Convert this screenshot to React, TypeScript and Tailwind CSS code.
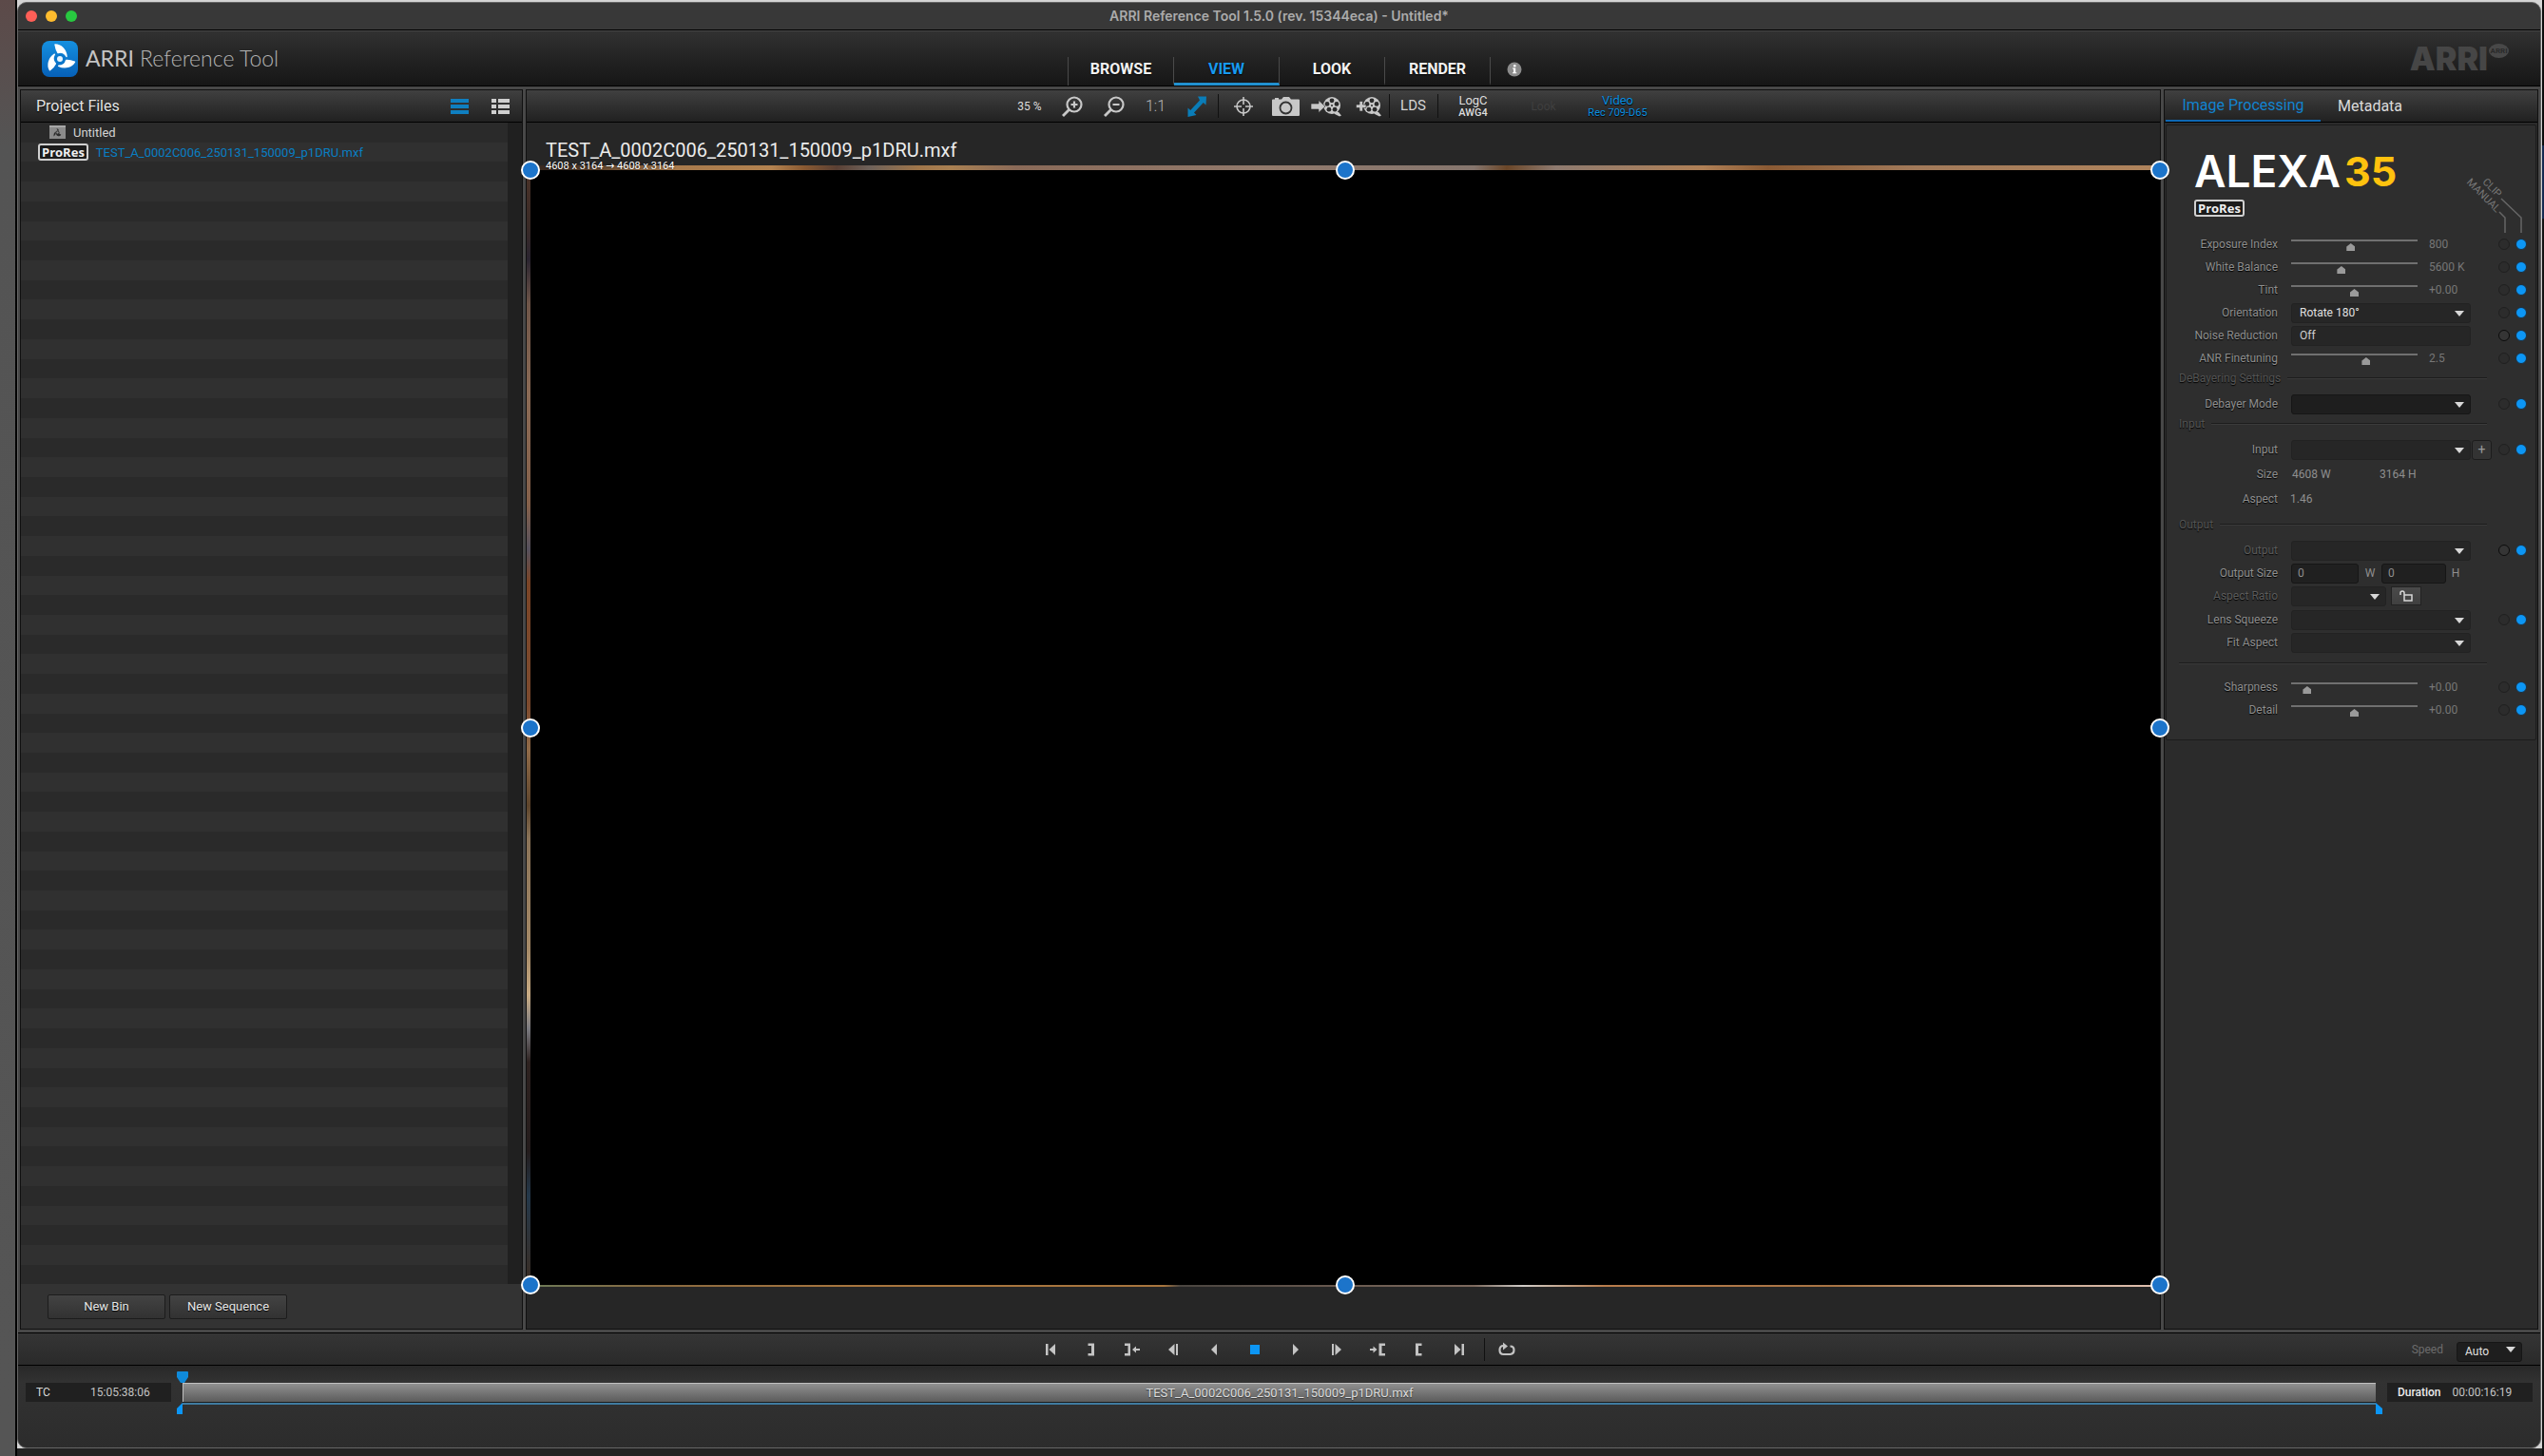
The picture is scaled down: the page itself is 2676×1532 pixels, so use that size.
import type { ReactNode } from "react";

const CLIP_NAME = "TEST_A_0002C006_250131_150009_p1DRU.mxf";

const labelShadow = "[text-shadow:0_1px_1px_#000]";

function AppLogo({ className }: { className?: string }) {
    const blade = "M14 4C20 4 25.5 9 26 16.5C24 13 20.5 11.5 17 12.5C15.5 10.5 14.5 7 14 4Z";
    return (
        <svg className={className} viewBox="0 0 38 38" fill="none">
            <defs>
                <linearGradient id="logoBg" x1="0" y1="0" x2="0" y2="1">
                    <stop offset="0" stopColor="#1590e0" />
                    <stop offset="1" stopColor="#0660b8" />
                </linearGradient>
            </defs>
            <rect width="38" height="38" rx="8" fill="url(#logoBg)" />
            {[0, 120, 240].map((a) => (
                <path key={a} d={blade} fill="#fff" stroke="#fff" strokeWidth="1.4" strokeLinejoin="round" transform={`rotate(${a} 19 19)`} />
            ))}
            <circle cx="19" cy="19" r="5" fill="#0b78cc" />
            <circle cx="19" cy="19" r="3" fill="#e8f3fc" />
        </svg>
    );
}

function BinIcon() {
    return (
        <svg className="w-[17px] h-[14px]" viewBox="0 0 17 14">
            <rect width="17" height="14" fill="#8b8b8b" />
            <rect width="17" height="2" fill="#a8a8a8" />
            <g fill="#2b2b2b">
                <path d="M7.5 3q2.500.4 2.500 2.800l-1.500-.6z" />
                <path d="M4.500 11.500q-.4-3.500 2-5l.2 2q-.8 1.800-2.200 3z" />
                <path d="M6.500 9.500l4-1 1.800 1.300q-1.500 2.300-3.700 1.200z" />
            </g>
            <circle cx="8.500" cy="7.500" r="1.600" fill="none" stroke="#2b2b2b" />
        </svg>
    );
}

function ProResBadge() {
    return (
        <span className="inline-flex h-[18px] items-center rounded-[3px] border-2 border-[#d0d0d0] bg-[#1c1c1c] px-[2px] font-['Open_Sans',sans-serif] text-[13px] leading-none font-bold text-[#f0f0f0]">
            ProRes
        </span>
    );
}

function Caret({ className }: { className: string }) {
    return (
        <svg className={className} viewBox="0 0 10 6">
            <path d="M0 0h10L5 6z" fill="#d8d8d8" />
        </svg>
    );
}

function Dropdown({ id, value = "", width, dark, bright }: { id: string; value?: string; width: string; dark?: boolean; bright?: boolean }) {
    return (
        <div className={`relative h-[21px] ${width}`}>
            <select
                id={id}
                defaultValue={value}
                className={`h-full w-full appearance-none rounded-[3px] border px-2 text-[12px] leading-none ${dark ? "border-[#161616] bg-[#1e1e1e]" : "border-[#222] bg-[#262626]"} ${bright ? "text-[#e0e0e0]" : "text-[#bbb]"}`}
            >
                <option>{value}</option>
            </select>
            <Caret className="pointer-events-none absolute top-2 right-[7px] h-[6px] w-[10px]" />
        </div>
    );
}

function TitleBar() {
    return (
        <div className="grid h-[29px] grid-cols-[1fr_auto_1fr] items-center border-b border-black bg-[#383838] px-2">
            <div className="flex gap-2">
                <button aria-label="Close" className="h-3 w-3 rounded-full bg-[#ff5f57]" />
                <button aria-label="Minimize" className="ml-px h-3 w-3 rounded-full bg-[#febc2e]" />
                <button aria-label="Zoom" className="ml-px h-3 w-3 rounded-full bg-[#28c840]" />
            </div>
            <h1 className="font-['Inter',sans-serif] text-[14px] leading-none font-semibold text-[#ababab]">ARRI Reference Tool 1.5.0 (rev. 15344eca) - Untitled*</h1>
        </div>
    );
}

function Header() {
    const tabs = ["BROWSE", "VIEW", "LOOK", "RENDER"];
    return (
        <header className="grid h-[59px] grid-cols-[1fr_auto_1fr] items-end border-t border-b border-t-[#484848] border-b-black bg-gradient-to-b from-[#313131] to-[#161616]">
            <div className="flex h-full items-center gap-2 pl-[25px]">
                <AppLogo className="h-[38px] w-[38px]" />
                <span className="font-['Lato',sans-serif] text-[23px] leading-none font-light text-[#b4b4b4]">
                    <span className="font-normal text-[#c4c4c4]">ARRI</span> Reference Tool
                </span>
            </div>
            <nav className="flex h-[30px] border-l border-[#4a4a4a]">
                {tabs.map((t) => (
                    <button
                        key={t}
                        className={`w-[111px] border-r border-r-[#4a4a4a] border-b-[3px] pb-px text-[16px] leading-none font-bold ${labelShadow} ${t === "VIEW" ? "border-b-[#2191cf] text-[#189af0]" : "border-b-transparent text-[#f2f2f2]"}`}
                    >
                        {t}
                    </button>
                ))}
            </nav>
            <div className="flex h-full items-end justify-between pr-[33px]">
                <button aria-label="Info" className="mb-[9px] ml-[17px]">
                    <svg className="h-4 w-4" viewBox="0 0 16 16">
                        <circle cx="8" cy="8" r="7.500" fill="#8c8c8c" />
                        <circle cx="8.300" cy="4.300" r="1.300" fill="#fff" />
                        <path d="M6 6.500h3.200v4.800h1.100v1H6v-1h1.100V7.500H6z" fill="#fff" />
                    </svg>
                </button>
                <div className="flex h-full items-center gap-px">
                    <span className="font-['Inter',sans-serif] text-[34px] leading-none font-black text-[#464646]">ARRI</span>
                    <span className="mb-4 flex h-[15px] w-[21px] items-center justify-center rounded-[50%] bg-[#484848] text-[8px] font-bold text-[#2a2a2a]">ARRI</span>
                </div>
            </div>
        </header>
    );
}

function ProjectPanel() {
    const rows = Array.from({ length: 59 }, (_, i) => i);
    return (
        <aside className="flex w-[529px] shrink-0 flex-col border border-[#101010] bg-[#333]">
            <div className="flex h-[34px] items-center justify-between border-b border-black bg-gradient-to-b from-[#404040] to-[#212121] pr-[13px] pl-4">
                <h2 className={`text-[16px] text-[#e4e4e4] ${labelShadow}`}>Project Files</h2>
                <div className="flex gap-6">
                    <button aria-label="Flat list">
                        <svg className="h-4 w-[19px]" viewBox="0 0 19 16" fill="#0f7fc0">
                            <path d="M0 0h19v4H0zM0 6h19v4H0zM0 12h19v4H0z" />
                        </svg>
                    </button>
                    <button aria-label="Detail list">
                        <svg className="h-4 w-[19px]" viewBox="0 0 19 16" fill="#cfcfcf">
                            <path d="M0 0h5v4H0zM7 0h12v4H7zM0 6h5v4H0zM7 6h12v4H7zM0 12h5v4H0zM7 12h12v4H7z" />
                        </svg>
                    </button>
                </div>
            </div>
            <div className="flex flex-1">
                <ul className="flex flex-1 flex-col">
                    {rows.map((i) => (
                        <li key={i} className={`flex flex-1 basis-0 items-center ${i % 2 ? "bg-[#303030]" : "bg-[#2a2a2a]"}`}>
                            {i === 0 && (
                                <div className="flex items-center gap-2 pl-[30px]">
                                    <BinIcon />
                                    <span className="text-[13px] leading-none text-[#d4d4d4]">Untitled</span>
                                </div>
                            )}
                            {i === 1 && (
                                <div className="flex items-center gap-2 pl-[18px]">
                                    <ProResBadge />
                                    <span className="text-[13px] leading-none text-[#087fc4]">{CLIP_NAME}</span>
                                </div>
                            )}
                        </li>
                    ))}
                </ul>
                <div className="w-[15px] bg-[#202020]" />
            </div>
            <div className="flex h-[47px] items-center gap-1 pl-7">
                {["New Bin", "New Sequence"].map((t) => (
                    <button key={t} className={`h-[26px] w-[124px] rounded-[2px] border border-[#1c1c1c] bg-gradient-to-b from-[#434343] to-[#323232] text-[13px] leading-none text-[#e8e8e8] ${labelShadow}`}>
                        {t}
                    </button>
                ))}
            </div>
        </aside>
    );
}

function Reel() {
    return (
        <g>
            <circle cx="22" cy="10" r="9" fill="#c8c8c8" />
            <path d="M24 17h5l3 3.500-2 1-5-2.500z" fill="#c8c8c8" />
            <g fill="#2a2a2a">
                <circle cx="22" cy="4.800" r="2.400" />
                <circle cx="27" cy="8.400" r="2.400" />
                <circle cx="25.100" cy="14.200" r="2.400" />
                <circle cx="18.900" cy="14.200" r="2.400" />
                <circle cx="17" cy="8.400" r="2.400" />
                <circle cx="22" cy="10" r="1" />
            </g>
        </g>
    );
}

function Tool({ label, width, children }: { label: string; width: string; children: ReactNode }) {
    return (
        <button aria-label={label} className={`flex h-full items-center justify-center ${width}`}>
            {children}
        </button>
    );
}

function ToolDivider() {
    return <div className="h-[25px] w-px bg-[#111]" />;
}

function Toolbar() {
    return (
        <div className="flex h-[34px] items-center justify-center border-b border-black bg-gradient-to-b from-[#404040] to-[#212121] pr-6 text-[#c8c8c8]">
            <span className="w-[47px] text-center text-[12px] text-[#dcdcdc]">35 %</span>
            <Tool label="Zoom in" width="w-[43px]">
                <svg className="h-[22px] w-[22px]" viewBox="0 0 22 22" fill="none" stroke="currentColor">
                    <circle cx="13" cy="9" r="7.500" strokeWidth="2.200" />
                    <path d="M7.500 14.500L1 21" strokeWidth="2.800" />
                    <path d="M9.500 9h7M13 5.500v7" strokeWidth="2.200" />
                </svg>
            </Tool>
            <Tool label="Zoom out" width="w-[44px]">
                <svg className="h-[22px] w-[22px]" viewBox="0 0 22 22" fill="none" stroke="currentColor">
                    <circle cx="13" cy="9" r="7.500" strokeWidth="2.200" />
                    <path d="M7.500 14.500L1 21" strokeWidth="2.800" />
                    <path d="M9.500 9h7" strokeWidth="2.200" />
                </svg>
            </Tool>
            <button className="h-full w-[44px] text-[16px] font-light text-[#b8b8b8]">1:1</button>
            <Tool label="Fit to view" width="w-[43px]">
                <svg className="h-[22px] w-5" viewBox="0 0 20 22" fill="#0a7db8">
                    <path d="M11 0.500L20 0.500L19.500 9.500L16.800 7L7 17.500L9.500 20L0.500 22L0.500 12.500L3.200 15L13 4.500z" />
                </svg>
            </Tool>
            <ToolDivider />
            <Tool label="Crosshair" width="w-[52px]">
                <svg className="h-5 w-5" viewBox="0 0 20 20" fill="none" stroke="currentColor" strokeWidth="1.600">
                    <circle cx="10" cy="10" r="7" />
                    <path d="M10 0v8M10 12v8M0 10h8M12 10h8" />
                </svg>
            </Tool>
            <Tool label="Snapshot" width="w-[37px]">
                <svg className="h-5 w-[29px]" viewBox="0 0 29 20">
                    <path d="M1 2.500h2V1h4v1.500h3L12 0h6l2 2.500h8q1 0 1 1V19q0 1-1 1H1q-1 0-1-1V3.500q0-1 1-1z" fill="currentColor" />
                    <circle cx="14.500" cy="11.500" r="6" fill="none" stroke="#333" strokeWidth="1.800" />
                </svg>
            </Tool>
            <Tool label="Insert clip" width="w-[48px]">
                <svg className="h-[22px] w-8" viewBox="0 0 32 22">
                    <Reel />
                    <path d="M0 8h8V4.500L15 11l-7 6.500V14H0z" fill="#c8c8c8" stroke="#2a2a2a" strokeWidth=".6" />
                </svg>
            </Tool>
            <Tool label="Add clip" width="w-[42px]">
                <svg className="h-[22px] w-[27px]" viewBox="5 0 27 22">
                    <Reel />
                    <path d="M5.500 9H9V5.500h3.500V9H16v3.500h-3.500V16H9v-3.500H5.500z" fill="#c8c8c8" stroke="#2a2a2a" strokeWidth=".6" />
                </svg>
            </Tool>
            <ToolDivider />
            <button className="h-full w-[50px] text-[15px] text-[#d4d4d4]">LDS</button>
            <ToolDivider />
            <button className="flex h-full w-[74px] flex-col items-center justify-center text-[#dedede]">
                <span className="text-[13px] leading-[15px]">LogC</span>
                <span className="text-[11px] leading-[12px] font-medium">AWG4</span>
            </button>
            <button disabled className="h-full w-[74px] text-[12px] text-[#3f3f3f]">Look</button>
            <button className={`flex h-full w-[82px] flex-col items-center justify-center text-[#0a8fe0] ${labelShadow}`}>
                <span className="text-[13px] leading-[15px]">Video</span>
                <span className="text-[11px] leading-[12px]">Rec 709-D65</span>
            </button>
        </div>
    );
}

const HANDLES = [
    "left-0 top-0",
    "left-1/2 top-0",
    "left-full top-0",
    "left-0 top-1/2",
    "left-full top-1/2",
    "left-0 top-full",
    "left-1/2 top-full",
    "left-full top-full",
];

function Viewer() {
    return (
        <section className="flex min-w-0 flex-1 flex-col border border-[#101010] bg-[#262626]">
            <Toolbar />
            <div className="h-[45px] pt-[17px] pl-5">
                <p className="text-[20px] leading-[24px] text-[#ececec]">{CLIP_NAME}</p>
            </div>
            <div className="flex flex-1 flex-col">
                <div className="relative h-[5px] bg-[linear-gradient(100deg,#3a2a20_0%,#3a2a20_2%,#a87a4c_9%,#b48350_15%,#8a5a32_17%,#5a4034_19%,#6e625a_21%,#a0764a_24%,#a98052_26%,#8a6a58_30%,#927a6c_45%,#86766e_58%,#6a4628_60%,#8f7b70_63%,#b08056_72%,#8a5a34_76%,#a27a5a_85%,#b0845c_100%)]">
                    <span className="absolute -top-[5px] left-5 text-[11px] leading-none whitespace-nowrap text-white [text-shadow:0_0_2px_#000]">
                        4608 x 3164 <span className="font-['DejaVu_Sans',sans-serif]">→</span> 4608 x 3164
                    </span>
                </div>
                <div className="flex flex-1">
                    <div className="w-[4px] bg-[linear-gradient(180deg,#4a3228_0%,#3a2a26_5%,#2a2430_8%,#6e5548_12%,#8a6a55_20%,#84604a_30%,#55505c_34%,#7a4426_37%,#7c4a2e_48%,#8f6a48_52%,#5e452c_57%,#8a7358_60%,#a58a68_70%,#c8ab84_74%,#7a7a80_77%,#2e2220_80%,#241c1c_88%,#24384a_92%,#3a2c22_100%)]" />
                    <div className="relative flex-1 bg-black">
                        {HANDLES.map((pos) => (
                            <span key={pos} className={`absolute z-10 h-5 w-5 -translate-x-1/2 -translate-y-1/2 rounded-full border-2 border-white bg-[#1c74ca] ${pos}`} />
                        ))}
                    </div>
                </div>
                <div className="h-[2px] bg-[linear-gradient(90deg,#6b7a58_0%,#8a6a40_8%,#a8763e_20%,#a8763e_39%,#4a4540_40%,#6a5a50_50%,#7d6a5e_58%,#d0ccc8_61%,#b87c4c_66%,#a87444_80%,#c8a890_92%,#e0c0b0_100%)]" />
            </div>
            <div className="h-[44px]" />
        </section>
    );
}

function SourceDots({ id, active = false }: { id: string; active?: boolean }) {
    return (
        <div className="ml-auto flex gap-[6px] pr-[9px]">
            <input
                type="radio"
                name={`${id}-source`}
                aria-label="Manual"
                className={`h-3 w-3 appearance-none rounded-full border ${active ? "border-[#0c0c0c] bg-[#353535]" : "border-[#202020] bg-[#2c2c2c]"}`}
            />
            <input
                type="radio"
                name={`${id}-source`}
                aria-label="Clip"
                defaultChecked
                className="h-3 w-3 appearance-none rounded-full border border-[#1c2f3f] bg-[#0c96f5]"
            />
        </div>
    );
}

function Row({ id, label, dim, dots = true, active, className = "", children }: { id: string; label: string; dim?: boolean; dots?: boolean; active?: boolean; className?: string; children: ReactNode }) {
    return (
        <div className={`flex h-6 items-center text-[12px] text-[#8f8f8f] ${className}`}>
            <label htmlFor={id} className={`mr-[14px] w-[117px] shrink-0 text-right ${labelShadow} ${dim ? "text-[#5c5c5c]" : ""}`}>
                {label}
            </label>
            {children}
            {dots && <SourceDots id={id} active={active} />}
        </div>
    );
}

function SliderRow({ id, label, value, text }: { id: string; label: string; value: number; text: string }) {
    return (
        <Row id={id} label={label}>
            <input
                id={id}
                type="range"
                defaultValue={value}
                className="h-4 w-[133px] appearance-none bg-transparent [&::-webkit-slider-runnable-track]:h-[10px] [&::-webkit-slider-runnable-track]:border-t-2 [&::-webkit-slider-runnable-track]:border-[#707070] [&::-webkit-slider-thumb]:mt-[2px] [&::-webkit-slider-thumb]:h-2 [&::-webkit-slider-thumb]:w-[9px] [&::-webkit-slider-thumb]:appearance-none [&::-webkit-slider-thumb]:bg-[#9a9a9a] [&::-webkit-slider-thumb]:[clip-path:polygon(50%_0,100%_45%,100%_100%,0_100%,0_45%)]"
            />
            <output htmlFor={id} className="ml-3 text-[#777]">{text}</output>
        </Row>
    );
}

function Section({ title, className }: { title: string; className: string }) {
    return (
        <div className={`flex items-center gap-[7px] pr-[51px] pl-[13px] ${className}`}>
            <h3 className={`text-[12px] leading-4 text-[#545454] ${labelShadow}`}>{title}</h3>
            <div className="h-[2px] flex-1 border-t border-[#1c1c1c] bg-[#3a3a3a]" />
        </div>
    );
}

function ImageProcessing() {
    return (
        <div className="mx-px mt-[2px] rounded-[2px] border border-[#1c1c1c] bg-[#2e2e2e] pb-[19px]">
            <div className="flex justify-between">
                <div className="pt-[25px] pl-[29px]">
                    <p className="flex h-[46px] items-center gap-1 leading-none">
                        <span className="font-['Inter',sans-serif] text-[46px] font-semibold text-white">ALEXA</span>
                        <span className="font-['Inter',sans-serif] text-[43px] font-bold text-[#ffc20e]">35</span>
                    </p>
                    <div className="mt-[7px] flex">
                        <ProResBadge />
                    </div>
                </div>
                <div className="relative h-[113px] w-[90px]">
                    <svg className="absolute inset-0 h-[113px] w-[90px]" viewBox="0 0 90 113" fill="none" stroke="#666" strokeWidth="1.500">
                        <path d="M54 77L75 97V113M52 91L58 97V113" />
                    </svg>
                    <span className="absolute top-[60px] left-[30px] w-[28px] rotate-45 text-center text-[11px] leading-3 text-[#777]">CLIP</span>
                    <span className="absolute top-[68px] left-[10px] w-[50px] rotate-45 text-center text-[11px] leading-3 text-[#777]">MANUAL</span>
                </div>
            </div>
            <SliderRow id="ei" label="Exposure Index" value={47} text="800" />
            <SliderRow id="wb" label="White Balance" value={39} text="5600 K" />
            <SliderRow id="tint" label="Tint" value={50} text="+0.00" />
            <Row id="orientation" label="Orientation">
                <Dropdown id="orientation" value="Rotate 180°" width="w-[189px]" bright />
            </Row>
            <Row id="nr" label="Noise Reduction" active>
                <input id="nr" type="text" readOnly defaultValue="Off" className="h-[21px] w-[189px] rounded-[3px] border border-[#222] bg-[#262626] px-2 text-[12px] text-[#cfcfcf]" />
            </Row>
            <SliderRow id="anr" label="ANR Finetuning" value={60} text="2.5" />
            <Section title="DeBayering Settings" className="mt-px" />
            <Row id="debayer" label="Debayer Mode" className="mt-[7px]">
                <Dropdown id="debayer" width="w-[189px]" dark />
            </Row>
            <Section title="Input" className="mt-px" />
            <Row id="input" label="Input" className="mt-[7px]">
                <Dropdown id="input" width="w-[189px]" />
                <button aria-label="Add input" className="ml-px h-[21px] w-[21px] rounded-[3px] border border-[#1c1c1c] bg-[#333] text-[14px] leading-none text-[#999]">+</button>
            </Row>
            <div className="mt-[2px] flex h-6 items-center text-[12px] text-[#8f8f8f]">
                <span className={`mr-[15px] w-[117px] text-right ${labelShadow}`}>Size</span>
                <span className="w-[92px]">4608 W</span>
                <span>3164 H</span>
            </div>
            <div className="mt-[2px] flex h-6 items-center text-[12px] text-[#8f8f8f]">
                <span className={`mr-[13px] w-[117px] text-right ${labelShadow}`}>Aspect</span>
                <span>1.46</span>
            </div>
            <Section title="Output" className="mt-[7px]" />
            <Row id="output" label="Output" dim active className="mt-[7px]">
                <Dropdown id="output" width="w-[189px]" />
            </Row>
            <Row id="out-w" label="Output Size" dots={false}>
                <input id="out-w" type="text" defaultValue="0" className="h-[21px] w-[71px] rounded-[3px] border border-[#161616] bg-[#202020] px-[6px] text-[12px]" />
                <span className="w-[24px] text-center">W</span>
                <input aria-label="Output height" type="text" defaultValue="0" className="h-[21px] w-[68px] rounded-[3px] border border-[#161616] bg-[#202020] px-[6px] text-[12px]" />
                <span className="w-5 text-center">H</span>
            </Row>
            <Row id="ratio" label="Aspect Ratio" dim dots={false}>
                <Dropdown id="ratio" width="w-[100px]" />
                <button aria-label="Lock aspect ratio" className="ml-[5px] flex h-5 w-8 items-center justify-center border border-[#222] bg-gradient-to-b from-[#4a4a4a] to-[#404040]">
                    <svg className="h-3 w-[14px]" viewBox="0 0 14 12" fill="none" stroke="#d8d8d8" strokeWidth="1.500">
                        <path d="M5 5h8v6H5zM1 5V3q0-2 2-2t2 2v2" />
                    </svg>
                </button>
            </Row>
            <Row id="squeeze" label="Lens Squeeze" className="mt-px">
                <Dropdown id="squeeze" width="w-[189px]" />
            </Row>
            <Row id="fit" label="Fit Aspect" dots={false}>
                <Dropdown id="fit" width="w-[189px]" />
            </Row>
            <div className="mt-[9px] mr-[51px] mb-3 ml-[13px] h-[2px] border-t border-[#1c1c1c] bg-[#3a3a3a]" />
            <SliderRow id="sharpness" label="Sharpness" value={10} text="+0.00" />
            <SliderRow id="detail" label="Detail" value={50} text="+0.00" />
        </div>
    );
}

function Inspector() {
    return (
        <aside className="w-[394px] shrink-0 border border-[#101010] bg-[#2b2b2b]">
            <div className={`flex h-[34px] border-b border-black bg-gradient-to-b from-[#404040] to-[#212121] pl-px text-[16px] ${labelShadow}`}>
                <button className="w-[163px] border-b-2 border-[#0f68b4] text-[#1283cf]">Image Processing</button>
                <button className="px-[18px] text-[#dadada]">Metadata</button>
            </div>
            <ImageProcessing />
        </aside>
    );
}

const TRANSPORT: { label: string; art: ReactNode }[] = [
    { label: "Go to start", art: <><path d="M5 2h2.500v12H5z" /><path d="M15 2v12L8.500 8z" /></> },
    { label: "Set out", art: <path d="M6.500 1.500H13v13H6.500V12H10V4H6.500z" /> },
    { label: "Go to out", art: <><path d="M2 1.500h6v13H2V12h3.500V4H2z" /><path d="M10 8l4-3.500V7h4v2h-4v2.500z" /></> },
    { label: "Step back", art: <><path d="M11.500 2v12L5 8z" /><path d="M13 2h2v12h-2z" /></> },
    { label: "Play reverse", art: <path d="M13 2v12L7 8z" /> },
    { label: "Stop", art: <path d="M5 3h10v10H5z" fill="#0c96f5" /> },
    { label: "Play", art: <path d="M7 2v12l6-6z" /> },
    { label: "Step forward", art: <><path d="M8.500 2v12l6.500-6z" /><path d="M5 2h2v12H5z" /></> },
    { label: "Go to in", art: <><path d="M18 1.500h-6.500v13H18V12h-3.500V4H18z" /><path d="M9.500 8l-4-3.500V7H2v2h3.500v2.500z" /></> },
    { label: "Set in", art: <path d="M13.500 1.500H7v13h6.500V12H10V4h3.500z" /> },
    { label: "Go to end", art: <><path d="M12.500 2H15v12h-2.500z" /><path d="M5 2v12l6.500-6z" /></> },
];

function Transport() {
    return (
        <div className="grid h-[35px] grid-cols-[1fr_auto_1fr] items-center border-t border-b border-black bg-gradient-to-b from-[#353535] to-[#2a2a2a]">
            <div />
            <div className="flex items-center">
                {TRANSPORT.map(({ label, art }) => (
                    <button key={label} aria-label={label} className="flex h-6 w-[43px] items-center justify-center">
                        <svg className="h-4 w-5" viewBox="0 0 20 16" fill="#c4c4c4">{art}</svg>
                    </button>
                ))}
                <div className="ml-1 h-6 w-px bg-[#111]" />
                <button aria-label="Loop" className="flex h-6 w-[46px] items-center justify-center">
                    <svg className="h-4 w-[18px]" viewBox="0 0 18 16" fill="none" stroke="#c4c4c4" strokeWidth="2.200">
                        <path d="M12.500 4.500q4 0 4 4t-4 4.500h-7q-4 0-4-4.500t4-4.500" />
                        <path d="M5 0.500v8l5-4z" fill="#c4c4c4" stroke="none" />
                    </svg>
                </button>
            </div>
            <div className="flex items-center justify-end gap-[14px] pr-[19px]">
                <label htmlFor="speed" className="text-[12px] text-[#6c6c6c]">Speed</label>
                <Dropdown id="speed" value="Auto" width="w-[69px]" dark bright />
            </div>
        </div>
    );
}

function Timeline() {
    return (
        <footer className="flex h-[86px] bg-gradient-to-b from-[#282828] via-[#323232] via-20% to-[#2c2c2c] pt-[18px] pr-2 pl-2">
            <div className="flex h-5 w-[153px] items-center bg-[#202020] pl-[11px] text-[12px] text-[#d8d8d8]">
                <span className="w-[57px]">TC</span>
                <time className="text-[#c4c4c4]">15:05:38:06</time>
            </div>
            <div className="relative mr-3 ml-3 h-[23px] flex-1">
                <div className="flex h-[20px] items-center justify-center border-t border-l border-[#c0c0c0] bg-gradient-to-b from-[#909090] to-[#5c5c5c]">
                    <span className="text-[13px] leading-none text-[#dcdcdc] [text-shadow:0_1px_1px_#333]">{CLIP_NAME}</span>
                </div>
                <div className="h-[3px] border-t border-[#1c1c1c] bg-[#3f7ba0]" />
                <svg className="absolute -top-3 -left-[6px] h-3 w-3" viewBox="0 0 12 12">
                    <path d="M1 0h10q1 0 1 1v5L8 12H4L0 6V1q0-1 1-1z" fill="#0f8ada" />
                </svg>
                <svg className="absolute top-[21px] -left-[6px] h-3 w-[6px]" viewBox="0 0 6 12">
                    <path d="M6 0v12H0V6z" fill="#0c96f5" />
                </svg>
                <svg className="absolute top-[21px] left-full h-3 w-[7px]" viewBox="0 0 7 12">
                    <path d="M0 0v12h7V6z" fill="#0c96f5" />
                </svg>
            </div>
            <div className="flex h-5 w-[153px] items-center gap-3 bg-[#202020] pl-[11px] text-[12px]">
                <span className="font-medium text-[#ececec]">Duration</span>
                <time className="text-[#c4c4c4]">00:00:16:19</time>
            </div>
        </footer>
    );
}

export default function App() {
    return (
        <div className="flex min-h-screen bg-[#232323] font-['Roboto',sans-serif]">
            <div className="w-[18px] border-r-2 border-black bg-gradient-to-b from-[#5c4a49] via-[#545454] via-10% to-[#555]" />
            <div className="flex min-w-0 flex-1 flex-col">
                <div className="flex flex-1 flex-col bg-[#d4d4d4] pt-[2px] pr-px">
                    <div className="flex flex-1 flex-col overflow-hidden rounded-[10px] border border-[#666] bg-[#484848]">
                        <TitleBar />
                        <Header />
                        <main className="flex flex-1 gap-[3px] px-[2px] py-[3px]">
                            <ProjectPanel />
                            <Viewer />
                            <Inspector />
                        </main>
                        <Transport />
                        <Timeline />
                    </div>
                </div>
                <div className="h-2" />
            </div>
            <div className="w-[2px] bg-[linear-gradient(180deg,#0a0a0a_0%,#0a0a0a_10%,#14284f_10%,#14284f_15%,#111_15%,#111_100%)]" />
        </div>
    );
}
